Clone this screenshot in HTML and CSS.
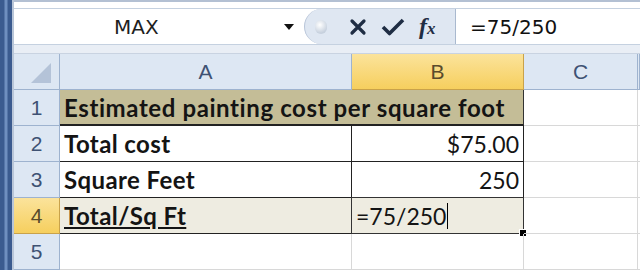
FILE: index.html
```html
<!DOCTYPE html>
<html lang="en">
<head>
    <meta charset="UTF-8">
    <title>Painting cost</title>
    <link rel="stylesheet" href="styles.css">
</head>
<body>
    <div class="window">
        <div class="side-stripe"></div>
        <div class="main">
            <!-- Barre de formule -->
            <div class="formula-bar">
                <div class="name-box">
                    <span class="name-text">MAX</span>
                    <span class="name-arrow"></span>
                </div>
                <div class="fx-buttons">
                    <span class="knob"></span>
                    <svg class="icon" width="18" height="18" viewBox="0 0 18 18">
                        <path d="M3 3 L15 15 M15 3 L3 15" stroke="#1f2d44" stroke-width="3.2" stroke-linecap="round"/>
                    </svg>
                    <svg class="icon" width="24" height="18" viewBox="0 0 24 18">
                        <path d="M2 9 L8.5 15.5 L22 2" fill="none" stroke="#1f2d44" stroke-width="3.6" stroke-linejoin="round"/>
                    </svg>
                    <span class="fx"><i>f</i><i class="x">x</i></span>
                </div>
                <div class="formula-input">=75/250</div>
            </div>
            <div class="bar-gap"></div>
            <!-- Feuille -->
            <div class="sheet">
                <div class="hdr corner"><span class="select-all"></span></div>
                <div class="hdr col">A</div>
                <div class="hdr col active">B</div>
                <div class="hdr col">C</div>
                <div class="hdr col"></div>

                <div class="hdr row">1</div>
                <div class="cell title">Estimated painting cost per square foot</div>
                <div class="cell"></div>
                <div class="cell"></div>

                <div class="hdr row">2</div>
                <div class="cell label boxed">Total cost</div>
                <div class="cell num boxed">$75.00</div>
                <div class="cell"></div>
                <div class="cell"></div>

                <div class="hdr row">3</div>
                <div class="cell label boxed">Square Feet</div>
                <div class="cell num boxed">250</div>
                <div class="cell"></div>
                <div class="cell"></div>

                <div class="hdr row active">4</div>
                <div class="cell label boxed shaded"><u>Total/Sq Ft</u></div>
                <div class="cell editing">=75/250<span class="caret"></span><span class="handle"></span></div>
                <div class="cell"></div>
                <div class="cell"></div>

                <div class="hdr row">5</div>
                <div class="cell"></div>
                <div class="cell"></div>
                <div class="cell"></div>
                <div class="cell"></div>
            </div>
        </div>
    </div>
</body>
</html>
```

FILE: styles.css
```css
html, body {
    margin: 0;
    padding: 0;
}

body {
    width: 640px;
    height: 270px;
    overflow: hidden;
    background: #ffffff;
    font-family: Lato, "Open Sans", sans-serif;
}

.window {
    display: flex;
    height: 270px;
}

.side-stripe {
    width: 12px;
    flex: none;
    background: linear-gradient(to right, #3b5b8f 0, #3b5b8f 4px, #6f8fbf 5px, #6f8fbf 7px, #3b5b8f 8px);
    border-right: 2px solid #b9c6d8;
}

.main {
    flex: 1;
    display: flex;
    flex-direction: column;
    min-width: 0;
}

/* barre de formule */
.formula-bar {
    display: flex;
    height: 35px;
    margin-top: 8px;
    border-top: 1px solid #c5d1e0;
    border-bottom: 1px solid #c5d1e0;
    position: relative;
}

.formula-bar::before {
    content: "";
    position: absolute;
    left: 0;
    right: 0;
    top: -9px;
    height: 2px;
    background: #b3c0d3;
}

.name-box {
    width: 290px;
    flex: none;
    background: #fff;
    display: flex;
    align-items: center;
    position: relative;
}

.name-text {
    font-family: "DejaVu Sans", sans-serif;
    font-size: 20px;
    color: #1e1e1e;
    margin-left: 100px;
}

.name-arrow {
    position: absolute;
    left: 270px;
    top: 15px;
    border-left: 5px solid transparent;
    border-right: 5px solid transparent;
    border-top: 6px solid #111;
}

.fx-buttons {
    width: 152px;
    flex: none;
    display: flex;
    align-items: center;
    background: #dfe7f2;
    border-left: 1px solid #b8c5d8;
    border-right: 1px solid #a9b9cf;
    border-radius: 18px 0 0 18px;
    box-sizing: border-box;
}

.knob {
    width: 12px;
    height: 14px;
    margin-left: 10px;
    border-radius: 7px;
    background: radial-gradient(circle at 40% 35%, #ffffff, #c7d1de 70%);
}

.icon {
    display: block;
}

.fx-buttons .icon:first-of-type {
    margin-left: 22px;
}

.fx-buttons .icon + .icon {
    margin-left: 14px;
}

.fx {
    margin-left: 14px;
    font-family: "Liberation Serif", serif;
    font-weight: bold;
    font-size: 24px;
    color: #1f2d44;
}

.fx .x {
    font-size: 17px;
}

.formula-input {
    flex: 1;
    background: #fff;
    font-family: "DejaVu Sans", sans-serif;
    font-size: 20px;
    color: #111;
    padding-left: 14px;
    display: flex;
    align-items: center;
}

.bar-gap {
    height: 8px;
    background: #e9eef5;
    border-bottom: 1px solid #c9d3e1;
}

/* feuille */
.sheet {
    display: grid;
    grid-template-columns: 46px 292px 172px 114px 2px;
    grid-auto-rows: 36px;
}

.hdr {
    background: #dde7f3;
    color: #3e5273;
    font-family: "Liberation Sans", sans-serif;
    font-size: 21px;
    display: flex;
    align-items: center;
    justify-content: center;
    border-right: 1px solid #9eb3cf;
    border-bottom: 1px solid #9eb3cf;
    box-sizing: border-box;
}

.hdr.active {
    background: linear-gradient(#fbe39b, #f6cf5e);
    color: #5a4b2c;
    border-color: #c9a24a;
}

.corner {
    position: relative;
}

.select-all {
    position: absolute;
    right: 8px;
    bottom: 6px;
    width: 0;
    height: 0;
    border-left: 20px solid transparent;
    border-bottom: 20px solid #b4c3d8;
}

.cell {
    border-right: 1px solid #d8d8d8;
    border-bottom: 1px solid #d8d8d8;
    box-sizing: border-box;
    font-size: 23px;
    color: #141414;
    display: flex;
    align-items: center;
    padding: 0 4px;
    white-space: nowrap;
    position: relative;
}

.title {
    grid-column: span 2;
    background: #c4bd97;
    font-weight: bold;
    border-right: 1px solid #333;
    border-bottom: 2px solid #222;
}

.label {
    font-weight: bold;
    font-size: 24px;
    letter-spacing: 0.4px;
}

.title {
    font-size: 24px;
    letter-spacing: 0.6px;
}

.boxed {
    border-right: 1px solid #222;
    border-bottom: 1px solid #222;
}

.num {
    justify-content: flex-end;
}

.shaded {
    background: #eeece1;
}

.editing {
    background: #eeece1;
    border: 1px solid #333;
    margin: -1px 0 0 -1px;
}

.caret {
    width: 1px;
    height: 26px;
    background: #000;
    margin-left: 1px;
}

.handle {
    position: absolute;
    right: -4px;
    bottom: -4px;
    width: 6px;
    height: 6px;
    background: #000;
    border: 1px solid #fff;
}
```
